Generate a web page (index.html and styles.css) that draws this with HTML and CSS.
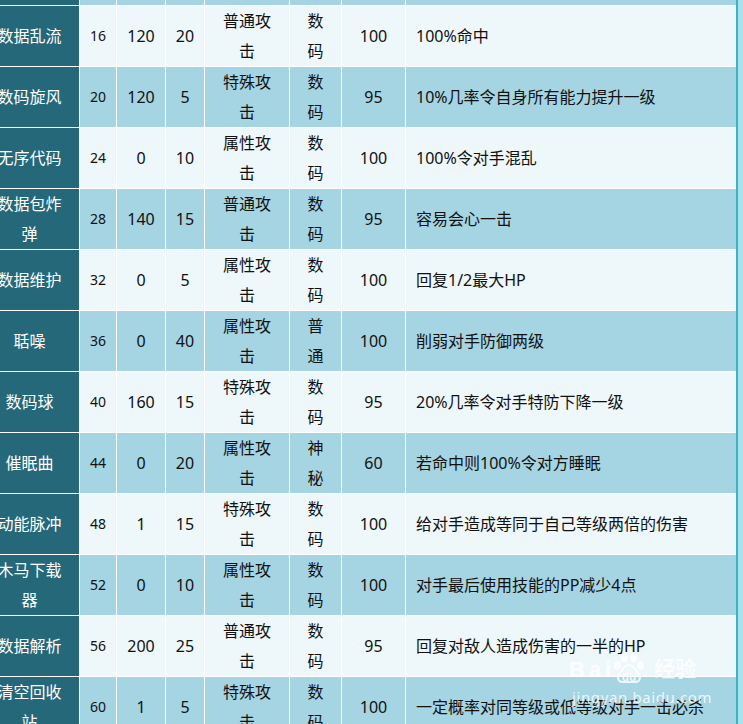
FILE: index.html
```html
<!DOCTYPE html>
<html lang="zh-CN">
<head>
<meta charset="utf-8">
<title>技能表</title>
<link rel="stylesheet" href="styles.css">
</head>
<body>
<div class="frame">
  <div class="table">
    <div class="row blue">
      <div class="c name"></div><div class="c lv"></div><div class="c num"></div><div class="c num"></div><div class="c kind"></div><div class="c elem"></div><div class="c num"></div><div class="c desc"></div>
    </div>
    <div class="row light">
      <div class="c name">数据乱流</div><div class="c lv">16</div><div class="c num">120</div><div class="c num">20</div><div class="c kind">普通攻击</div><div class="c elem">数码</div><div class="c num">100</div><div class="c desc">100%命中</div>
    </div>
    <div class="row blue">
      <div class="c name">数码旋风</div><div class="c lv">20</div><div class="c num">120</div><div class="c num">5</div><div class="c kind">特殊攻击</div><div class="c elem">数码</div><div class="c num">95</div><div class="c desc">10%几率令自身所有能力提升一级</div>
    </div>
    <div class="row light">
      <div class="c name">无序代码</div><div class="c lv">24</div><div class="c num">0</div><div class="c num">10</div><div class="c kind">属性攻击</div><div class="c elem">数码</div><div class="c num">100</div><div class="c desc">100%令对手混乱</div>
    </div>
    <div class="row blue">
      <div class="c name">数据包炸弹</div><div class="c lv">28</div><div class="c num">140</div><div class="c num">15</div><div class="c kind">普通攻击</div><div class="c elem">数码</div><div class="c num">95</div><div class="c desc">容易会心一击</div>
    </div>
    <div class="row light">
      <div class="c name">数据维护</div><div class="c lv">32</div><div class="c num">0</div><div class="c num">5</div><div class="c kind">属性攻击</div><div class="c elem">数码</div><div class="c num">100</div><div class="c desc">回复1/2最大HP</div>
    </div>
    <div class="row blue">
      <div class="c name">聒噪</div><div class="c lv">36</div><div class="c num">0</div><div class="c num">40</div><div class="c kind">属性攻击</div><div class="c elem">普通</div><div class="c num">100</div><div class="c desc">削弱对手防御两级</div>
    </div>
    <div class="row light">
      <div class="c name">数码球</div><div class="c lv">40</div><div class="c num">160</div><div class="c num">15</div><div class="c kind">特殊攻击</div><div class="c elem">数码</div><div class="c num">95</div><div class="c desc">20%几率令对手特防下降一级</div>
    </div>
    <div class="row blue">
      <div class="c name">催眠曲</div><div class="c lv">44</div><div class="c num">0</div><div class="c num">20</div><div class="c kind">属性攻击</div><div class="c elem">神秘</div><div class="c num">60</div><div class="c desc">若命中则100%令对方睡眠</div>
    </div>
    <div class="row light">
      <div class="c name">动能脉冲</div><div class="c lv">48</div><div class="c num">1</div><div class="c num">15</div><div class="c kind">特殊攻击</div><div class="c elem">数码</div><div class="c num">100</div><div class="c desc">给对手造成等同于自己等级两倍的伤害</div>
    </div>
    <div class="row blue">
      <div class="c name">木马下载器</div><div class="c lv">52</div><div class="c num">0</div><div class="c num">10</div><div class="c kind">属性攻击</div><div class="c elem">数码</div><div class="c num">100</div><div class="c desc">对手最后使用技能的PP减少4点</div>
    </div>
    <div class="row light">
      <div class="c name">数据解析</div><div class="c lv">56</div><div class="c num">200</div><div class="c num">25</div><div class="c kind">普通攻击</div><div class="c elem">数码</div><div class="c num">95</div><div class="c desc">回复对敌人造成伤害的一半的HP</div>
    </div>
    <div class="row blue">
      <div class="c name">清空回收站</div><div class="c lv">60</div><div class="c num">1</div><div class="c num">5</div><div class="c kind">特殊攻击</div><div class="c elem">数码</div><div class="c num">100</div><div class="c desc">一定概率对同等级或低等级对手一击必杀</div>
    </div>
  </div>

  <div class="watermark">
    <div class="wm-top">
      <span class="wm-bai">Bai</span>
      <svg class="wm-paw" width="32" height="30" viewBox="0 0 32 30">
        <ellipse cx="4.5" cy="12.5" rx="3.4" ry="4.4" fill="#fff"/>
        <ellipse cx="11.5" cy="4.8" rx="3.6" ry="4.5" fill="#fff"/>
        <ellipse cx="20.5" cy="4.8" rx="3.6" ry="4.5" fill="#fff"/>
        <ellipse cx="27.5" cy="12.5" rx="3.4" ry="4.4" fill="#fff"/>
        <path d="M16 12 C11 12 10 17 7 20 C4 23 4 29 10 29 L22 29 C28 29 28 23 25 20 C22 17 21 12 16 12 Z" fill="none" stroke="#fff" stroke-width="2.2"/>
        <text x="16" y="27.5" text-anchor="middle" class="wm-du">du</text>
      </svg>
      <span class="wm-jy">经验</span>
    </div>
    <div class="wm-url">jingyan.baidu.com</div>
  </div>
</div>
</body>
</html>
```

FILE: styles.css
```css
html, body {
  margin: 0;
  padding: 0;
}

body {
  background: #a7e4e9;
  font-family: "Noto Sans", "Noto Sans CJK SC", sans-serif;
  color: #111;
}

.frame {
  position: relative;
  width: 738px;
  height: 724px;
  box-sizing: border-box;
  border-right: 2px solid #3eb0cc;
  overflow: hidden;
  background: #fff;
}

.table {
  display: flex;
  flex-direction: column;
  gap: 1px;
  margin-top: -55px;
  margin-left: -20px;
  background: #fff;
}

.row {
  display: grid;
  grid-template-columns: 99px 36px 48px 38px 84px 51px 63px 330px;
  gap: 1px;
  height: 60px;
}

.c {
  display: flex;
  align-items: center;
  justify-content: center;
  text-align: center;
  font-size: 16px;
  line-height: 30px;
  box-sizing: border-box;
  overflow: hidden;
}

.light .c { background: #eef7fa; }
.blue .c { background: #a5d4e2; }

.row .name {
  background: #256879;
  color: #fff;
  padding: 0 10px;
}

.lv {
  font-size: 14px;
}

.kind {
  padding: 0 14px;
}

.elem {
  padding: 0 12px;
}

.desc {
  justify-content: flex-start;
  text-align: left;
  padding-left: 10px;
}

.watermark {
  position: absolute;
  left: 569px;
  top: 653px;
  color: #fff;
  opacity: 0.8;
}

.wm-top {
  display: flex;
  align-items: flex-end;
  height: 30px;
}

.wm-bai {
  font-family: "Liberation Sans", sans-serif;
  font-weight: bold;
  font-size: 22px;
  line-height: 22px;
  letter-spacing: 4px;
  margin-bottom: 2px;
}

.wm-paw {
  display: block;
  margin: 0 9px 0 -2px;
}

.wm-du {
  font-family: "Liberation Sans", sans-serif;
  font-weight: bold;
  font-size: 12px;
  fill: #fff;
}

.wm-jy {
  font-family: "Noto Sans CJK SC", sans-serif;
  font-weight: bold;
  font-size: 21px;
  line-height: 22px;
  margin-bottom: 5px;
}

.wm-url {
  font-family: "Noto Sans", sans-serif;
  font-size: 15px;
  line-height: 18px;
  margin-top: 5px;
  margin-left: 3px;
  letter-spacing: 0.6px;
}
```
